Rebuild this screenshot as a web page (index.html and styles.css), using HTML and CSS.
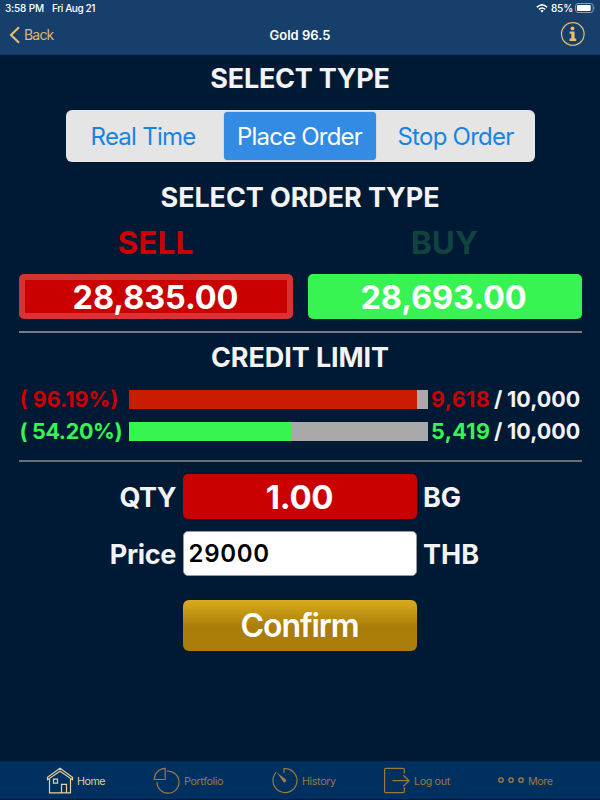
FILE: index.html
```html
<!DOCTYPE html>
<html lang="en">
<head>
<meta charset="utf-8">
<title>Gold 96.5</title>
<link rel="stylesheet" href="styles.css">
</head>
<body>
<header class="top">
  <div class="status">
    <span class="time">3:58 PM</span><span class="date">Fri Aug 21</span>
    <svg class="wifi" width="12" height="9" viewBox="0 0 12 9" fill="none" stroke="#fff" stroke-width="1.5"><path d="M.8 3.3Q6-1.5 11.2 3.3M2.9 5.4Q6 2.6 9.1 5.4"/><path d="M4.3 6.7Q6 5.3 7.7 6.7L6 8.5z" fill="#fff" stroke="none"/></svg>
    <span class="percent">85%</span>
    <svg class="battery" width="21" height="10" viewBox="0 0 21 10"><rect x=".6" y=".5" width="17.6" height="9" rx="2.6" fill="none" stroke="#8ba0b8"/><rect x="2" y="2" width="13.7" height="6" rx="1.3" fill="#fff"/><path d="M19.3 3.5q1.4 1.5 0 3z" fill="#8ba0b8"/></svg>
  </div>
  <nav class="nav">
    <a class="back"><svg width="12" height="18" viewBox="0 0 12 18" fill="none" stroke="#e8c16e" stroke-width="2.1"><path d="M11 1.2L3 9l8 7.8"/></svg><span class="back-text">Back</span></a>
    <h1 class="title">Gold 96.5</h1>
    <svg class="info" width="26" height="26" viewBox="0 0 26 26"><circle cx="12.8" cy="12" r="11.3" fill="none" stroke="#e3bd6b" stroke-width="1.2"/><circle cx="12.5" cy="6.4" r="1.9" fill="#e8c16e"/><path d="M9.6 9.4h5v7h1.6v2.5H9.6v-2.5h1.7v-4.6H9.6z" fill="#e8c16e"/></svg>
  </nav>
</header>
<main class="main">
  <h2 class="heading heading-type">SELECT TYPE</h2>
  <div class="segments">
    <button class="segment real">Real Time</button>
    <button class="segment active">Place Order</button>
    <button class="segment stop">Stop Order</button>
  </div>
  <h2 class="heading heading-order">SELECT ORDER TYPE</h2>
  <section class="quotes">
    <div class="side sell">SELL</div>
    <div class="side buy">BUY</div>
    <button class="quote quote-sell">28,835.00</button>
    <button class="quote quote-buy">28,693.00</button>
  </section>
  <section class="credit">
    <h2 class="heading heading-credit">CREDIT LIMIT</h2>
    <div class="limit red"><span class="pct">( 96.19%)</span><div class="bar"><div class="fill" style="width:96.19%"></div></div><span class="used">9,618</span><span class="slash">/</span><span class="total">10,000</span></div>
    <div class="limit green"><span class="pct">( 54.20%)</span><div class="bar"><div class="fill" style="width:54.2%"></div></div><span class="used">5,419</span><span class="slash">/</span><span class="total">10,000</span></div>
  </section>
  <section class="form">
    <span class="label qty-label">QTY</span><div class="field qty">1.00</div><span class="unit bg">BG</span>
    <span class="label price-label">Price</span><div class="field price">29000</div><span class="unit thb">THB</span>
    <button class="confirm">Confirm</button>
  </section>
</main>
<footer class="tabs">
  <a class="tab tab-home"><svg width="28" height="28" viewBox="0 0 28 28" fill="none" stroke="#e5cf9b" stroke-width="1.2"><path d="M14 1.3L1.5 10.2v2.5L14 4.3l12.5 8.4v-2.5zM3.5 12v13.8h21V12M7.5 12.2h4v4h-4zM15.5 25.8v-8.5h5v8.5"/></svg><span class="tab-text">Home</span></a>
  <a class="tab tab-portfolio"><svg width="28" height="28" viewBox="0 0 28 28" fill="none" stroke="#98793f" stroke-width="1.2"><path d="M12.2 1.3v11.2H1.3A11 11 0 0 1 12.2 1.3zM14 4.2A11 11 0 1 1 4 15.2"/></svg><span class="tab-text">Portfolio</span></a>
  <a class="tab tab-history"><svg width="28" height="28" viewBox="0 0 28 28" fill="none" stroke="#98793f" stroke-width="1.2"><path d="M13 6V1.6A12 12 0 1 1 5.2 5.4"/><path d="M5.8 5.4l9 7.2a1.7 1.7 0 0 1-2.3 2.4z" fill="#a48241" stroke="none"/></svg><span class="tab-text">History</span></a>
  <a class="tab tab-logout"><svg width="28" height="28" viewBox="0 0 28 28" fill="none" stroke="#98793f" stroke-width="1.2"><path d="M21.3 6.5V2.5q0-1.2-1.2-1.2H2.8q-1.2 0-1.2 1.2v22q0 1.2 1.2 1.2h17.3q1.2 0 1.2-1.2v-4.2M9.5 13.7h16M20.3 8.2l5.8 5.5-5.8 5.5"/></svg><span class="tab-text">Log out</span></a>
  <a class="tab tab-more"><svg width="28" height="28" viewBox="0 0 28 28" fill="none" stroke="#a48241" stroke-width="1.3"><circle cx="4" cy="13" r="2.2"/><circle cx="14" cy="13" r="2.2"/><circle cx="24" cy="13" r="2.2"/></svg><span class="tab-text">More</span></a>
</footer>
</body>
</html>
```
FILE: styles.css
```css
* { box-sizing: border-box; }
body {
  margin: 0;
  width: 600px;
  height: 800px;
  display: flex;
  flex-direction: column;
  background: #001a35;
  color: #f3f3f3;
  font-family: Inter, "Liberation Sans", sans-serif;
  overflow: hidden;
}
h1, h2 { margin: 0; }
button { font: inherit; border: 0; padding: 0; color: inherit; }
svg { display: block; flex: none; }
span, .side, .quote, .field, .segment, .confirm { white-space: nowrap; }

.top { height: 55px; background: #173f6b; border-bottom: 1px solid #12365d; }
.status { height: 16px; padding: 0 4px 0 5px; display: flex; align-items: center; font-size: 10px; font-weight: 500; color: #fff; letter-spacing: -.2px; }
.time { letter-spacing: -.15px; }
.date { margin-left: 8px; letter-spacing: -.4px; }
.wifi { margin-left: auto; }
.percent { margin: 0 2px 0 3px; letter-spacing: -.1px; }
.nav { height: 37px; padding: 0 14px 0 8px; display: grid; grid-template-columns: 1fr auto 1fr; align-items: center; }
.back { display: flex; align-items: center; gap: 4px; color: #d9b878; font-size: 14px; letter-spacing: -.8px; }
.back-text { letter-spacing: -.8px; }
.title { font-size: 13px; font-weight: 600; color: #fff; margin-left: 6px; }
.info { justify-self: end; }

.main { height: 706px; padding: 9px 18.5px 0; }
.heading { height: 30px; line-height: 30px; font-size: 27px; font-weight: 700; letter-spacing: -.25px; text-align: center; }
.segments { height: 52px; margin: 16px 47px 0; padding: 2px; display: grid; grid-template-columns: 156px 152px 1fr; border-radius: 6px; background: #e5e5e5; }
.segment { background: none; color: #1784e4; font-size: 24px; border-radius: 4px; letter-spacing: -.75px; }
.segment.active { background: #338be3; color: #fff; box-shadow: 0 0 1px #0008; letter-spacing: -.8px; }
.segment.real { padding-right: 5px; }
.segment.stop { padding-left: 3px; }
.heading-order { margin-top: 21px; letter-spacing: -.1px; }
.quotes { display: grid; grid-template-columns: 274px 274px; justify-content: space-between; grid-template-rows: 61px 45px; height: 120px; border-bottom: 2px solid #77797c; }
.side { text-align: center; font-size: 31.5px; font-weight: 700; line-height: 60px; letter-spacing: .1px; }
.sell { color: #cb0000; }
.buy { color: #10443e; }
.quote { height: 45px; border-radius: 5px; font-size: 32.5px; font-weight: 700; line-height: 35px; color: #fff; letter-spacing: -.1px; padding: 1px 2px 0 0; }
.quote-sell { background: #ca0000; border: 6px solid #d63434; padding-right: 0; line-height: 33px; }
.quote-buy { background: #37f453; }
.credit { height: 129px; border-bottom: 2px solid #696d76; }
.heading-credit { height: 57px; line-height: 50px; letter-spacing: -.1px; }
.limit { height: 19px; margin-bottom: 13px; display: grid; grid-template-columns: 110.5px 299px 66px 13px 1fr; align-items: center; font-size: 21.5px; font-weight: 700; line-height: 19px; }
.pct { padding-left: 1px; }
.bar { height: 19px; background: #a9a9a9; }
.fill { height: 100%; }
.red .pct, .red .used { color: #cb0000; }
.red .fill { background: #ca1c00; }
.green .pct, .green .used { color: #37f453; }
.green .pct { letter-spacing: -.35px; }
.green .fill { background: #37f453; }
.used { padding-left: 3px; letter-spacing: .4px; }
.form { display: grid; grid-template-columns: 157.5px 234px 1fr; column-gap: 6.5px; grid-template-rows: 45px 45px 51px; row-gap: 12px; padding-top: 12px; align-items: center; font-size: 27px; font-weight: 700; letter-spacing: -.3px; }
.label, .unit { padding-top: 2px; }
.unit { letter-spacing: 0; }
.label { justify-self: end; }
.qty-label { letter-spacing: -.5px; }
.price-label { letter-spacing: -.35px; }
.field { height: 45px; line-height: 45px; border-radius: 5px; }
.qty { background: #ca0000; color: #fff; font-size: 33px; text-align: center; line-height: 47px; }
.price { background: #fff; color: #000; font-size: 24px; font-weight: 600; letter-spacing: .7px; padding-left: 5px; border: 1px solid #999; line-height: 44px; }
.confirm { grid-column: 2; height: 51px; margin-top: 23px; border-radius: 6px; color: #fff; font-size: 32px; font-weight: 600; letter-spacing: -1.1px; background: linear-gradient(#d9ac1d, #ab7d0a 52%, #ab7d0a); }

.tabs { height: 39px; padding: 6px 0 0 46px; display: flex; align-items: flex-start; background: #003060; border-bottom: 1px solid #001a35; }
.tab { display: flex; align-items: center; gap: 3px; color: #98793f; font-size: 10.7px; letter-spacing: -.35px; }
.tab-text { padding-top: 1px; }
.tab-home { width: 107px; color: #e5cf9b; letter-spacing: -.45px; }
.tab-portfolio { width: 118px; }
.tab-history { width: 112px; }
.tab-logout { width: 114px; }
```
